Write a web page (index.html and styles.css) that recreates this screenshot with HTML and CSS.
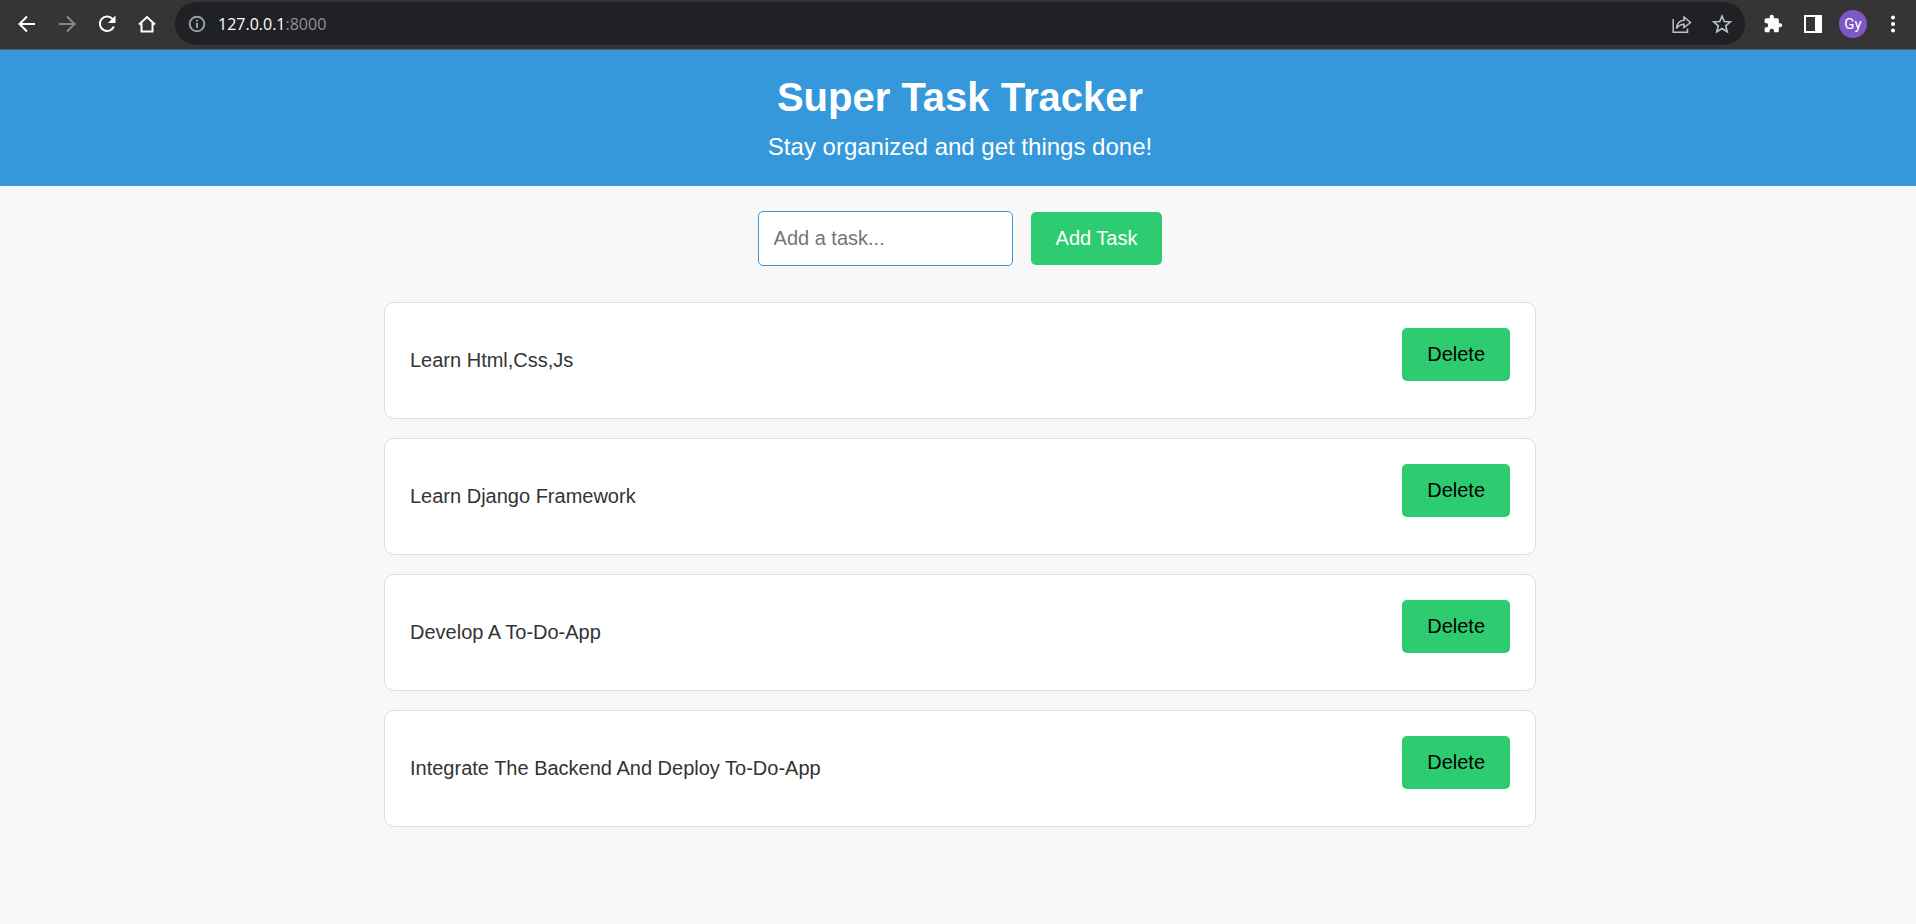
FILE: index.html
```html
<!DOCTYPE html>
<html lang="en">
<head>
<meta charset="utf-8">
<title>Super Task Tracker</title>
<link rel="stylesheet" href="styles.css">
</head>
<body>
<div class="toolbar">
  <div class="group">
    <button class="icon" aria-label="Back"><svg viewBox="0 0 20 20"><path d="M18 10H3M10 2.500L2.500 10l7.500 7.500"/></svg></button>
    <button class="icon dim" aria-label="Forward"><svg viewBox="0 0 20 20"><path d="M2 10h15M10 2.500l7.500 7.500-7.500 7.500"/></svg></button>
    <button class="icon" aria-label="Reload"><svg viewBox="0 0 20 20"><path d="M16.800 12.500A7.200 7.200 0 1 1 15.500 5"/><path class="solid" d="M18.500 1.500v7.500H11z"/></svg></button>
    <button class="icon" aria-label="Home"><svg viewBox="0 0 20 20"><path d="M2 10.500L10 3l8 7.500M4.500 9v8.500h11V9"/></svg></button>
  </div>
  <div class="omnibox">
    <svg class="info" viewBox="0 0 20 20"><circle cx="10" cy="10" r="7.300"/><path d="M10 9v5M10 5.800v1.800"/></svg>
    <span class="address">127.0.0.1<span class="port">:8000</span></span>
    <button class="icon soft" aria-label="Share"><svg viewBox="0 0 20 20"><path d="M1.200 5v13.300h14.300V14.500M4.500 14.500c.5-5 3-8 7.500-8.200V3l6.500 5.500-6.500 5v-3.300c-3.500 0-5.500 1.300-7.500 4.300z"/></svg></button>
    <button class="icon soft star" aria-label="Bookmark"><svg viewBox="0 0 20 20"><path d="M10 2.800l2.100 5 5.400.4-4.100 3.500 1.300 5.300-4.700-2.900-4.700 2.900 1.300-5.300-4.100-3.500 5.400-.4z"/></svg></button>
  </div>
  <div class="group">
    <button class="icon" aria-label="Extensions"><svg viewBox="0 0 24 24"><path class="solid" d="M20.500 11H19V7c0-1.100-.9-2-2-2h-4V3.500a2.500 2.500 0 0 0-5 0V5H4c-1.100 0-2 .9-2 2v3.800h1.500a2.700 2.700 0 0 1 0 5.400H2V20c0 1.100.9 2 2 2h3.800v-1.500a2.700 2.700 0 0 1 5.400 0V22H17c1.100 0 2-.9 2-2v-4h1.500a2.500 2.500 0 0 0 0-5z"/></svg></button>
    <button class="icon" aria-label="Side panel"><svg viewBox="0 0 20 20"><path d="M2 2h16v16H2z"/><path class="solid" d="M12 2h6v16h-6z"/></svg></button>
    <button class="avatar" aria-label="Profile Gy">Gy</button>
    <button class="icon" aria-label="Menu"><svg viewBox="0 0 20 20"><g class="solid"><circle cx="10" cy="3.500" r="2"/><circle cx="10" cy="10" r="2"/><circle cx="10" cy="16.500" r="2"/></g></svg></button>
  </div>
</div>
<div class="page">
  <header class="banner">
    <h1 class="title">Super Task Tracker</h1>
    <p class="subtitle">Stay organized and get things done!</p>
  </header>
  <main class="content">
    <form class="add-form">
      <input class="task-input" type="text" placeholder="Add a task..." aria-label="Add a task">
      <button class="btn btn-add" type="button">Add Task</button>
    </form>
    <ul class="tasks">
      <li class="task"><p class="task-name">Learn Html,Css,Js</p><button class="btn" type="button">Delete</button></li>
      <li class="task"><p class="task-name">Learn Django Framework</p><button class="btn" type="button">Delete</button></li>
      <li class="task"><p class="task-name">Develop A To-Do-App</p><button class="btn" type="button">Delete</button></li>
      <li class="task"><p class="task-name">Integrate The Backend And Deploy To-Do-App</p><button class="btn" type="button">Delete</button></li>
    </ul>
  </main>
</div>
</body>
</html>
```
FILE: styles.css
```css
* { box-sizing: border-box; }
body {
  margin: 0;
  background: #f8f8f8;
  color: #333;
  font-family: "Liberation Sans", Arial, sans-serif;
  font-size: 20px;
}
button, input { font: inherit; }

.toolbar {
  display: flex;
  align-items: center;
  gap: 8px;
  height: 50px;
  padding: 0 3px 2px 7px;
  background: #353535;
  border-bottom: 1px solid #5c5c5c;
}
.group { display: flex; align-items: center; }
.icon {
  display: flex;
  align-items: center;
  justify-content: center;
  width: 40px;
  height: 40px;
  padding: 0;
  border: 0;
  background: none;
  color: #fff;
}
.icon svg, .info {
  width: 20px;
  height: 20px;
  fill: none;
  stroke: currentColor;
  stroke-width: 2;
}
.icon .solid { fill: currentColor; stroke: none; }
.dim { color: #868686; }
.soft { color: #bdc1c6; }
.soft svg { stroke-width: 1.5; }
.star svg { width: 22px; height: 22px; }
.omnibox {
  display: flex;
  flex: 1;
  align-items: center;
  height: 43px;
  padding: 0 3px 0 12px;
  border-radius: 22px;
  background: #202124;
}
.info { color: #9aa0a6; }
.address {
  flex: 1;
  margin-left: 11px;
  color: #fff;
  font: 16px/20px "Open Sans", "Noto Sans", sans-serif;
}
.port { color: #8e9196; }
.avatar {
  width: 28px;
  height: 28px;
  margin: 0 6px;
  padding: 0;
  border: 0;
  border-radius: 50%;
  background: #7e57c2;
  color: #fff;
  font: 15px/26px Roboto, sans-serif;
}

.banner {
  padding: 25px 0 25px 4px;
  background: #3498db;
  color: #fff;
  text-align: center;
}
.title { margin: 0; font-size: 40px; line-height: 44px; }
.subtitle { margin: 14px 0 0; font-size: 24px; line-height: 28px; }

.content {
  max-width: 1156px;
  margin: 0 auto;
  padding: 25px 0 25px 4px;
}
.add-form {
  display: flex;
  align-items: center;
  justify-content: center;
  gap: 18px;
}
.task-input {
  width: 255px;
  padding: 15px;
  border: 1px solid #3498db;
  border-radius: 5px;
  background: #fff;
  line-height: 23px;
}
.task-input::placeholder { color: #757575; opacity: 1; }
.btn {
  padding: 15px 25px;
  border: 0;
  border-radius: 5px;
  background: #2ecc71;
  color: #000;
  line-height: 23px;
  cursor: pointer;
}
.btn-add { color: #fff; }
.tasks {
  display: grid;
  gap: 19px;
  margin: 36px 0 0;
  padding: 0;
  list-style: none;
}
.task {
  display: flex;
  align-items: flex-start;
  justify-content: space-between;
  padding: 25px;
  border: 1px solid #ddd;
  border-radius: 10px;
  background: #fff;
}
.task-name { margin: 20px 0; line-height: 25px; }
```
